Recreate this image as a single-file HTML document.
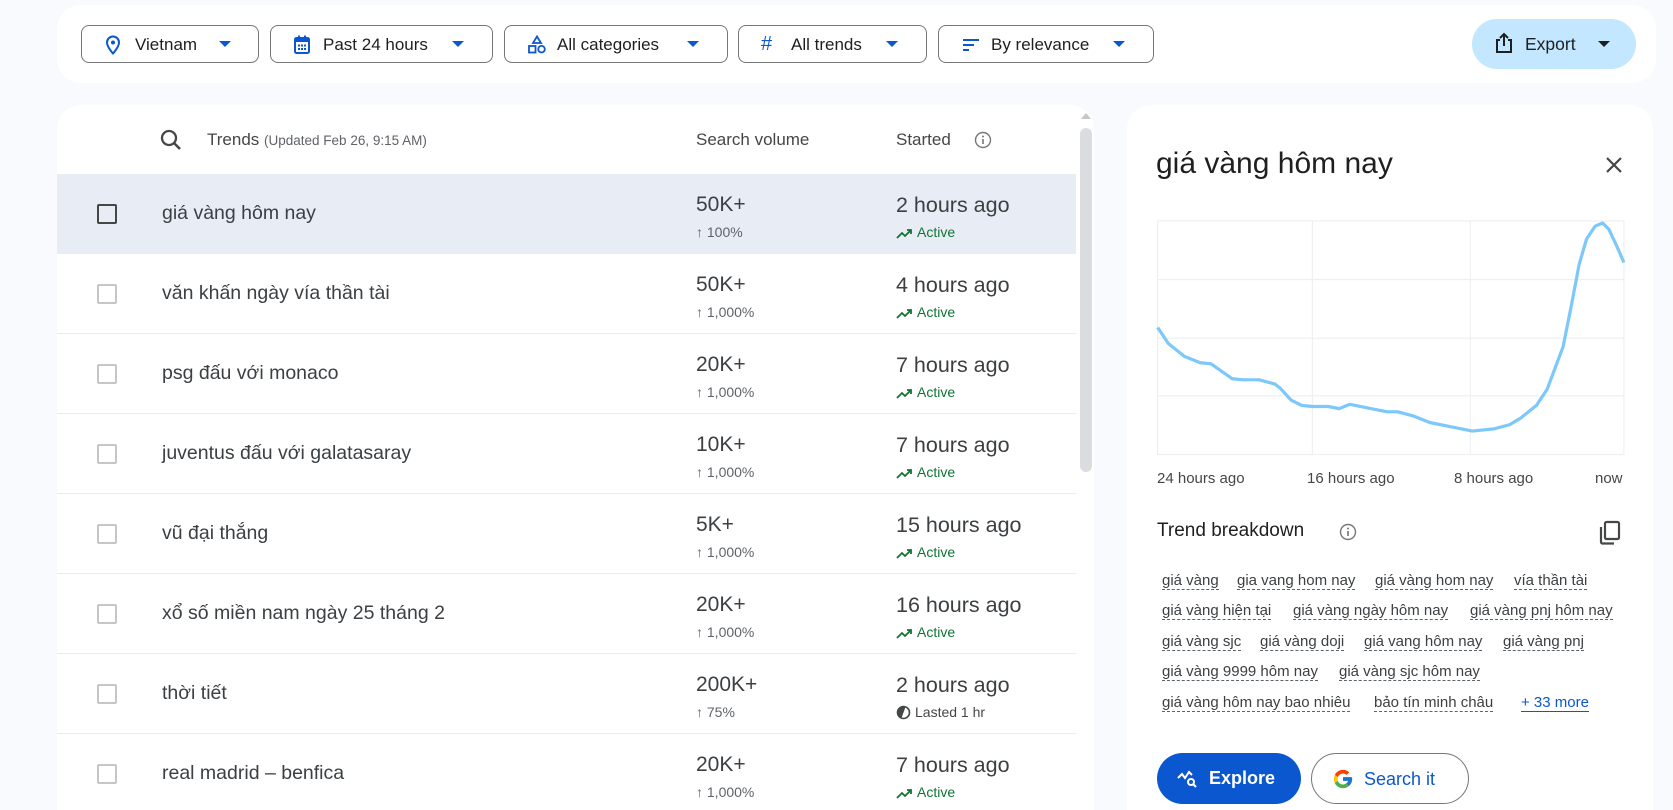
<!DOCTYPE html>
<html style="overflow:hidden;height:810px"><head><meta charset="utf-8">
<style>
*{margin:0;padding:0;box-sizing:border-box}
body{width:1673px;height:810px;overflow:hidden;background:#f8fafd;font-family:"Liberation Sans",Arial,sans-serif;color:#1f1f1f;position:relative}
.abs{position:absolute}
.top{left:57px;top:5px;width:1599px;height:78px;background:#fff;border-radius:24px}
.btn{position:absolute;top:25px;height:38px;border:1px solid #747775;border-radius:8px;display:flex;align-items:center;font-size:17px;color:#1f1f1f}
.btn svg.ic{position:absolute;left:22px;top:9px}
.btn .t{position:absolute;left:52px;top:9px}
.btn .dd{position:absolute;top:15px;width:0;height:0;border-left:6px solid transparent;border-right:6px solid transparent;border-top:6px solid #0b57d0}
.left{left:57px;top:105px;width:1037px;height:705px;background:#fff;border-radius:24px 24px 0 0;overflow:hidden}
.hdr{position:absolute;top:130px;font-size:17px;color:#444746}
.row{position:absolute;left:57px;width:1019px;height:80px;border-bottom:1px solid #e9ebee}
.row.sel{background:#e8edf5}
.cb{position:absolute;left:40px;top:30px;width:20px;height:20px;border:2px solid #c4c7c5;border-radius:2px}
.sel .cb{border-color:#444746}
.ti{position:absolute;left:105px;top:28px;font-size:19.5px;color:#3c4043}
.vol{position:absolute;left:639px;top:19px;font-size:21px;color:#3c4043}
.pct{position:absolute;left:639px;top:50px;font-size:14px;color:#5f6368}
.st{position:absolute;left:839px;top:19px;font-size:21.5px;color:#3c4043}
.act{position:absolute;left:839px;top:50px;font-size:14px;color:#137333}
.act svg{vertical-align:-2px;margin-right:4px}
.right{left:1127px;top:105px;width:526px;height:705px;background:#fff;border-radius:24px 24px 0 0}
.chip{position:absolute;font-size:15px;color:#3c4043;border-bottom:1.5px dashed #5f6368;line-height:17px}
.ax{position:absolute;top:470px;font-size:15px;color:#444746}
</style></head><body>
<div class="abs top"></div>
<div class="btn" style="left:81px;width:178px">
<svg class="ic" width="18" height="20" viewBox="0 0 18 20"><path d="M9 1.5a6 6 0 0 0-6 6c0 4.5 6 11 6 11s6-6.5 6-11a6 6 0 0 0-6-6z" fill="none" stroke="#0b57d0" stroke-width="2"/><circle cx="9" cy="7.5" r="2" fill="#0b57d0"/></svg>
<span class="t" style="left:53px">Vietnam</span><span class="dd" style="left:137px"></span></div>
<div class="btn" style="left:270px;width:223px">
<svg class="ic" width="18" height="20" viewBox="0 0 18 20"><rect x="2" y="3" width="14" height="15" rx="1.5" fill="none" stroke="#0b57d0" stroke-width="2"/><rect x="2" y="3" width="14" height="4" fill="#0b57d0"/><rect x="5" y="0.5" width="2" height="4" fill="#0b57d0"/><rect x="11" y="0.5" width="2" height="4" fill="#0b57d0"/><g fill="#0b57d0"><rect x="5" y="9.5" width="2" height="2"/><rect x="8" y="9.5" width="2" height="2"/><rect x="11" y="9.5" width="2" height="2"/><rect x="5" y="13" width="2" height="2"/><rect x="8" y="13" width="2" height="2"/><rect x="11" y="13" width="2" height="2"/></g></svg>
<span class="t">Past 24 hours</span><span class="dd" style="left:181px"></span></div>
<div class="btn" style="left:504px;width:224px">
<svg class="ic" width="20" height="20" viewBox="0 0 20 20"><path d="M10 1.5l4 6.5h-8z" fill="none" stroke="#0b57d0" stroke-width="1.8"/><rect x="2" y="11" width="6.5" height="6.5" fill="none" stroke="#0b57d0" stroke-width="1.8"/><circle cx="14.5" cy="14.2" r="3.3" fill="none" stroke="#0b57d0" stroke-width="1.8"/></svg>
<span class="t">All categories</span><span class="dd" style="left:182px"></span></div>
<div class="btn" style="left:738px;width:189px">
<span class="ic abs" style="left:22px;top:7px;font-size:20px;color:#0b57d0">#</span>
<span class="t">All trends</span><span class="dd" style="left:147px"></span></div>
<div class="btn" style="left:938px;width:216px">
<svg class="ic" width="20" height="20" viewBox="0 0 20 20"><g stroke="#0b57d0" stroke-width="2"><path d="M2 5h16M2 10h11M2 15h6"/></g></svg>
<span class="t">By relevance</span><span class="dd" style="left:174px"></span></div>
<div class="abs" style="left:1472px;top:19px;width:164px;height:50px;border-radius:25px;background:#c2e7ff">
<svg class="abs" style="left:22px;top:13px" width="20" height="22" viewBox="0 0 20 22"><path d="M6 8H3v12h14V8h-3" fill="none" stroke="#1f1f1f" stroke-width="2"/><path d="M10 14V2M6 6l4-4 4 4" fill="none" stroke="#1f1f1f" stroke-width="2"/></svg>
<span class="abs" style="left:53px;top:15px;font-size:17.5px">Export</span>
<span class="abs" style="left:126px;top:22px;border-left:6px solid transparent;border-right:6px solid transparent;border-top:6px solid #1f1f1f"></span></div>

<div class="abs left"></div>
<div class="abs" style="left:1081px;top:113px;width:0;height:0;border-left:5px solid transparent;border-right:5px solid transparent;border-bottom:6px solid #c4c7c5"></div>
<div class="abs" style="left:1080px;top:128px;width:12px;height:344px;background:#dadce0;border-radius:6px"></div>
<svg class="abs" style="left:159px;top:128px" width="24" height="24" viewBox="0 0 24 24"><circle cx="10" cy="10" r="7" fill="none" stroke="#444746" stroke-width="2.3"/><path d="M15 15l6 6" stroke="#444746" stroke-width="2.5"/></svg>
<div class="hdr" style="left:207px">Trends <span style="font-size:13.5px;color:#5f6368">(Updated Feb 26, 9:15 AM)</span></div>
<div class="hdr" style="left:696px">Search volume</div>
<div class="hdr" style="left:896px">Started</div>
<svg class="abs" style="left:974px;top:131px" width="18" height="18" viewBox="0 0 18 18"><circle cx="9" cy="9" r="7.5" fill="none" stroke="#747775" stroke-width="1.4"/><path d="M9 8v5" stroke="#747775" stroke-width="1.6"/><circle cx="9" cy="5.5" r="1" fill="#747775"/></svg>

<div class="row sel" style="top:174px"><div class="cb"></div><div class="ti">giá vàng hôm nay</div><div class="vol">50K+</div><div class="pct">↑ 100%</div><div class="st">2 hours ago</div><div class="act"><svg width="17" height="11" viewBox="0 0 17 11"><path d="M1 10l5-5 3 3 6-6M11 2h4v4" fill="none" stroke="#137333" stroke-width="1.8"/></svg>Active</div></div>
<div class="row" style="top:254px"><div class="cb"></div><div class="ti">văn khấn ngày vía thần tài</div><div class="vol">50K+</div><div class="pct">↑ 1,000%</div><div class="st">4 hours ago</div><div class="act"><svg width="17" height="11" viewBox="0 0 17 11"><path d="M1 10l5-5 3 3 6-6M11 2h4v4" fill="none" stroke="#137333" stroke-width="1.8"/></svg>Active</div></div>
<div class="row" style="top:334px"><div class="cb"></div><div class="ti">psg đấu với monaco</div><div class="vol">20K+</div><div class="pct">↑ 1,000%</div><div class="st">7 hours ago</div><div class="act"><svg width="17" height="11" viewBox="0 0 17 11"><path d="M1 10l5-5 3 3 6-6M11 2h4v4" fill="none" stroke="#137333" stroke-width="1.8"/></svg>Active</div></div>
<div class="row" style="top:414px"><div class="cb"></div><div class="ti">juventus đấu với galatasaray</div><div class="vol">10K+</div><div class="pct">↑ 1,000%</div><div class="st">7 hours ago</div><div class="act"><svg width="17" height="11" viewBox="0 0 17 11"><path d="M1 10l5-5 3 3 6-6M11 2h4v4" fill="none" stroke="#137333" stroke-width="1.8"/></svg>Active</div></div>
<div class="row" style="top:494px"><div class="cb"></div><div class="ti">vũ đại thắng</div><div class="vol">5K+</div><div class="pct">↑ 1,000%</div><div class="st">15 hours ago</div><div class="act"><svg width="17" height="11" viewBox="0 0 17 11"><path d="M1 10l5-5 3 3 6-6M11 2h4v4" fill="none" stroke="#137333" stroke-width="1.8"/></svg>Active</div></div>
<div class="row" style="top:574px"><div class="cb"></div><div class="ti">xổ số miền nam ngày 25 tháng 2</div><div class="vol">20K+</div><div class="pct">↑ 1,000%</div><div class="st">16 hours ago</div><div class="act"><svg width="17" height="11" viewBox="0 0 17 11"><path d="M1 10l5-5 3 3 6-6M11 2h4v4" fill="none" stroke="#137333" stroke-width="1.8"/></svg>Active</div></div>
<div class="row" style="top:654px"><div class="cb"></div><div class="ti">thời tiết</div><div class="vol">200K+</div><div class="pct">↑ 75%</div><div class="st">2 hours ago</div><div class="act" style="color:#444746"><svg width="15" height="15" viewBox="0 0 15 15" style="vertical-align:-3px"><circle cx="7.5" cy="7.5" r="6" fill="none" stroke="#444746" stroke-width="1.6"/><path d="M7.5 1.5a6 6 0 0 1 0 12z" fill="#444746" transform="rotate(200 7.5 7.5)"/></svg>Lasted 1 hr</div></div>
<div class="row" style="top:734px;border-bottom:none"><div class="cb"></div><div class="ti">real madrid – benfica</div><div class="vol">20K+</div><div class="pct">↑ 1,000%</div><div class="st">7 hours ago</div><div class="act"><svg width="17" height="11" viewBox="0 0 17 11"><path d="M1 10l5-5 3 3 6-6M11 2h4v4" fill="none" stroke="#137333" stroke-width="1.8"/></svg>Active</div></div>

<div class="abs right"></div>
<div class="abs" style="left:1156px;top:147px;font-size:30px;color:#1f1f1f">giá vàng hôm nay</div>
<svg class="abs" style="left:1605px;top:156px" width="18" height="18" viewBox="0 0 18 18"><path d="M2 2l14 14M16 2L2 16" stroke="#444746" stroke-width="2.2"/></svg>

<svg class="abs" style="left:0;top:0" width="1673" height="810" viewBox="0 0 1568 759.2" preserveAspectRatio="none">
<g stroke="#eceff1" stroke-width="1" fill="none">
<rect x="1085" y="207" width="437" height="219"/>
<path d="M1230 207V426M1378 207V426M1085 262H1522M1085 317H1522M1085 371H1522"/>
</g>
<path d="M1085 307L1095 322L1110 334L1125 340L1135 341L1145 348L1155 355L1165 356L1180 356L1195 360L1200 364L1210 375L1220 380L1230 381L1245 381L1255 383L1265 379L1280 382L1300 386L1310 386L1325 390L1340 396L1360 400L1380 404L1400 402L1415 398L1425 392L1440 380L1450 365L1465 325L1473 285L1480 248L1487 224L1495 212L1502 209L1508 215L1515 230L1522 246" fill="none" stroke="#7cc8fb" stroke-width="3" stroke-linejoin="round"/>
</svg>
<div class="ax" style="left:1157px">24 hours ago</div>
<div class="ax" style="left:1307px">16 hours ago</div>
<div class="ax" style="left:1454px">8 hours ago</div>
<div class="ax" style="left:1595px">now</div>

<div class="abs" style="left:1157px;top:520px;font-size:19px;color:#1f1f1f">Trend breakdown</div>
<svg class="abs" style="left:1339px;top:523px" width="18" height="18" viewBox="0 0 18 18"><circle cx="9" cy="9" r="7.5" fill="none" stroke="#747775" stroke-width="1.4"/><path d="M9 8v5" stroke="#747775" stroke-width="1.6"/><circle cx="9" cy="5.5" r="1" fill="#747775"/></svg>
<svg class="abs" style="left:1598px;top:520px" width="24" height="26" viewBox="0 0 24 26"><rect x="7" y="2" width="14" height="17" rx="1.5" fill="none" stroke="#444746" stroke-width="2.2"/><path d="M3 7v15a1.5 1.5 0 0 0 1.5 1.5H16" fill="none" stroke="#444746" stroke-width="2.2"/></svg>

<div class="chip" style="left:1162px;top:572px">giá vàng</div>
<div class="chip" style="left:1237px;top:572px">gia vang hom nay</div>
<div class="chip" style="left:1375px;top:572px">giá vàng hom nay</div>
<div class="chip" style="left:1514px;top:572px">vía thần tài</div>
<div class="chip" style="left:1162px;top:602px">giá vàng hiện tại</div>
<div class="chip" style="left:1293px;top:602px">giá vàng ngày hôm nay</div>
<div class="chip" style="left:1470px;top:602px">giá vàng pnj hôm nay</div>
<div class="chip" style="left:1162px;top:633px">giá vàng sjc</div>
<div class="chip" style="left:1260px;top:633px">giá vàng doji</div>
<div class="chip" style="left:1364px;top:633px">giá vang hôm nay</div>
<div class="chip" style="left:1503px;top:633px">giá vàng pnj</div>
<div class="chip" style="left:1162px;top:663px">giá vàng 9999 hôm nay</div>
<div class="chip" style="left:1339px;top:663px">giá vàng sjc hôm nay</div>
<div class="chip" style="left:1162px;top:694px">giá vàng hôm nay bao nhiêu</div>
<div class="chip" style="left:1374px;top:694px">bảo tín minh châu</div>
<div class="chip" style="left:1521px;top:694px;color:#0b57d0;border-bottom:1.5px solid #0b57d0">+ 33 more</div>

<div class="abs" style="left:1157px;top:753px;width:144px;height:51px;border-radius:26px;background:#0b57d0">
<svg class="abs" style="left:20px;top:16px" width="22" height="20" viewBox="0 0 22 20"><path d="M1 9l4-4 3 4 4-6 3 3" fill="none" stroke="#fff" stroke-width="2"/><circle cx="14" cy="13" r="3" fill="none" stroke="#fff" stroke-width="2"/><path d="M16 15l3 3" stroke="#fff" stroke-width="2"/></svg>
<span class="abs" style="left:52px;top:15px;font-size:18px;color:#fff;font-weight:bold">Explore</span></div>
<div class="abs" style="left:1311px;top:753px;width:158px;height:51px;border-radius:26px;border:1px solid #747775;background:#fff">
<svg class="abs" style="left:20px;top:14px" width="22" height="22" viewBox="0 0 48 48"><path d="M43.6 20.5H42V20H24v8h11.3C33.7 32.7 29.2 36 24 36c-6.6 0-12-5.4-12-12s5.4-12 12-12c3.1 0 5.8 1.2 7.9 3.1l5.7-5.7C34 6.1 29.3 4 24 4 13 4 4 13 4 24s9 20 20 20 20-9 20-20c0-1.3-.1-2.4-.4-3.5z" fill="#FFC107"/><path d="M6.3 14.7l6.6 4.8C14.7 15.1 19 12 24 12c3.1 0 5.8 1.2 7.9 3.1l5.7-5.7C34 6.1 29.3 4 24 4 16.3 4 9.7 8.3 6.3 14.7z" fill="#FF3D00"/><path d="M24 44c5.2 0 9.9-2 13.4-5.2l-6.2-5.2C29.2 35.1 26.7 36 24 36c-5.2 0-9.6-3.300-11.3-8l-6.5 5C9.5 39.6 16.2 44 24 44z" fill="#4CAF50"/><path d="M43.6 20.5H42V20H24v8h11.3c-.8 2.2-2.2 4.2-4.1 5.6l6.2 5.2C37 39.2 44 34 44 24c0-1.3-.1-2.4-.4-3.5z" fill="#1976D2"/></svg>
<span class="abs" style="left:52px;top:15px;font-size:18px;color:#0b57d0">Search it</span></div>
</body></html>
